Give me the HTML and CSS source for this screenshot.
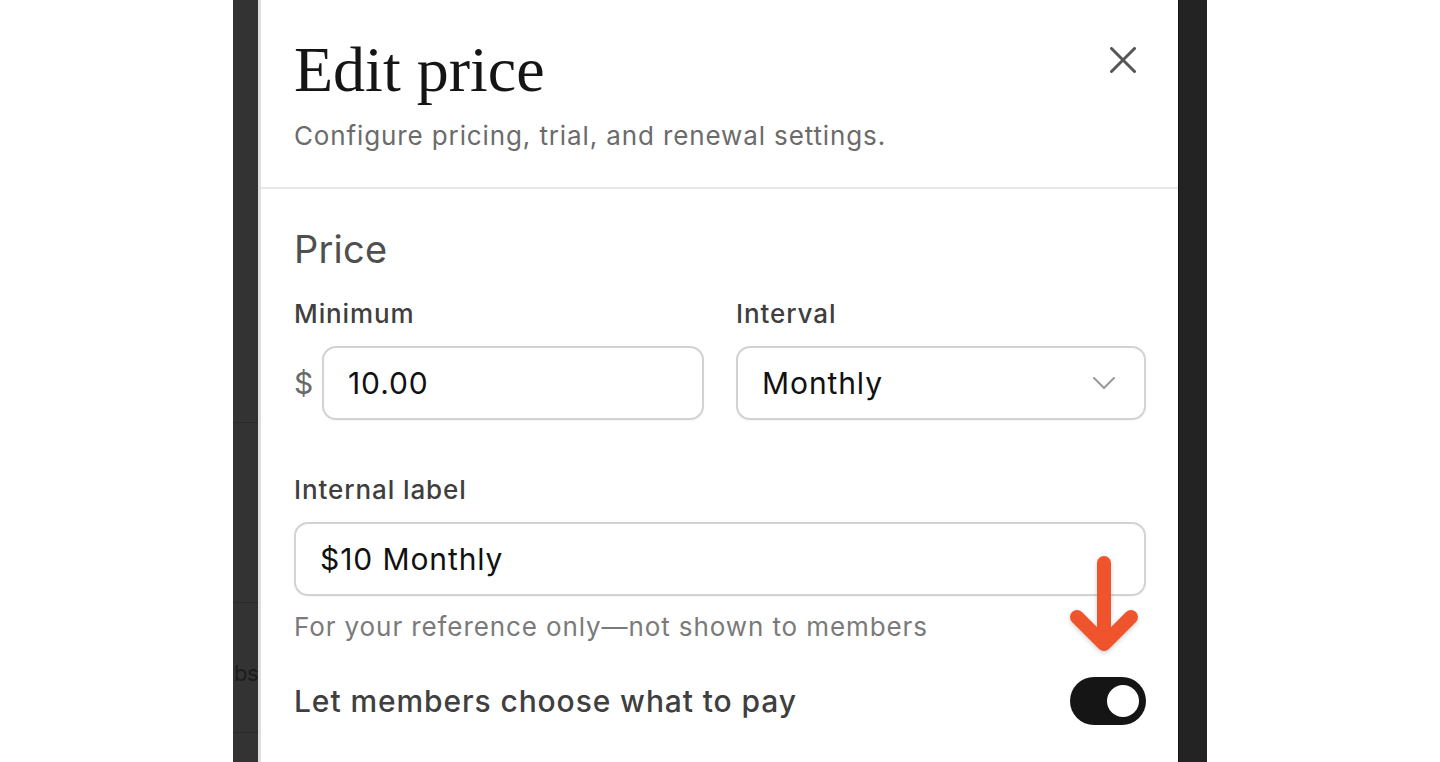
FILE: index.html
```html
<!DOCTYPE html>
<html lang="en">
<head>
<meta charset="utf-8">
<title>Edit price</title>
<link rel="stylesheet" href="styles.css">
</head>
<body>
<div class="page">
  <div class="gutter"></div>
  <div class="scene">
    <div class="under-left">
      <div class="u-row u-r1"></div>
      <div class="u-row u-r2"></div>
      <div class="u-row u-r3"><span class="u-text">bs</span></div>
      <div class="u-row u-r4"></div>
    </div>
    <div class="modal">
      <header class="modal-head">
        <div class="head-text">
          <h1 class="title">Edit price</h1>
          <p class="subtitle">Configure pricing, trial, and renewal settings.</p>
        </div>
        <button class="close" aria-label="Close">
          <svg width="26" height="26" viewBox="0 0 26 26"><path d="M1.5 1.5L24.5 24.5M24.5 1.5L1.5 24.5" stroke="#555" stroke-width="3" stroke-linecap="round" fill="none"/></svg>
        </button>
      </header>
      <section class="modal-body">
        <h2 class="section-title">Price</h2>
        <div class="grid2">
          <div class="field">
            <div class="label">Minimum</div>
            <div class="money">
              <span class="currency">$</span>
              <div class="input">10.00</div>
            </div>
          </div>
          <div class="field">
            <div class="label">Interval</div>
            <div class="input select">
              <span>Monthly</span>
              <svg width="22" height="12" viewBox="0 0 22 12"><path d="M1 1l10 10 10-10" stroke="#9a9a9a" stroke-width="2" fill="none" stroke-linecap="round" stroke-linejoin="round"/></svg>
            </div>
          </div>
        </div>
        <div class="field field-label">
          <div class="label">Internal label</div>
          <div class="input">$10 Monthly</div>
          <div class="help">For your reference only—not shown to members</div>
        </div>
        <div class="toggle-row">
          <span class="toggle-text">Let members choose what to pay</span>
          <span class="toggle"><span class="knob"></span></span>
        </div>
        <svg class="annot-arrow" width="82" height="110" viewBox="0 0 82 110"><path d="M41 13L41 88M14 67L41 94L68 67" stroke="#f0542c" stroke-width="14" stroke-linecap="round" stroke-linejoin="round" fill="none"/></svg>
      </section>
    </div>
    <div class="under-right"></div>
  </div>
</div>
</body>
</html>
```

FILE: styles.css
```css
* { box-sizing: border-box; }
html, body { margin: 0; padding: 0; background: #ffffff; }
body { font-family: Inter, "Noto Sans", "Liberation Sans", sans-serif; }

.page {
  display: flex;
  width: 1440px;
  height: 762px;
  overflow: hidden;
  background: #ffffff;
}
.gutter { width: 233px; flex: none; }

.scene {
  display: flex;
  width: 974px;
  flex: none;
  height: 762px;
  background: #232323;
}

.under-left {
  width: 25px;
  flex: none;
  background: #333333;
  display: flex;
  flex-direction: column;
  overflow: hidden;
}
.u-row { border-bottom: 1px solid #2a2a2a; flex: none; display: flex; justify-content: flex-start; align-items: center; }
.u-r1 { height: 423px; }
.u-r2 { height: 180px; }
.u-r3 { height: 130px; align-items: flex-start; }
.u-r4 { flex: 1; border-bottom: 0; }
.u-text {
  font-size: 22px;
  line-height: 30px;
  letter-spacing: -0.5px;
  color: #1c1c1c;
  white-space: nowrap;
  margin-top: 55px;
  margin-left: 1px;
}

.modal {
  width: 921px;
  flex: none;
  background: #ffffff;
  border-left: 3px solid #dedede;
  border-right: 1px solid #121212;
  position: relative;
}

.modal-head {
  display: flex;
  justify-content: space-between;
  align-items: flex-start;
  background: #ffffff;
  padding: 32px 35px 0 33px;
  height: 189px;
  border-bottom: 2px solid #e8e8e8;
}
.title {
  margin: 0;
  font-family: "Liberation Serif", "DejaVu Serif", serif;
  font-weight: 400;
  font-size: 64px;
  line-height: 76px;
  color: #151515;
}
.subtitle {
  margin: 10px 0 0;
  font-size: 26px;
  line-height: 36px;
  letter-spacing: 0.88px;
  color: #6b6b6b;
}
.close {
  margin-top: 8px;
  width: 40px;
  height: 40px;
  padding: 0;
  border: 0;
  background: transparent;
  display: flex;
  align-items: center;
  justify-content: center;
}

.modal-body {
  padding: 37px 32px 0 33px;
  letter-spacing: 0.9px;
}
.section-title {
  margin: 0;
  font-size: 38px;
  line-height: 46px;
  font-weight: 400;
  letter-spacing: 0.2px;
  color: #4f4f4f;
}
.grid2 {
  display: grid;
  grid-template-columns: 1fr 1fr;
  column-gap: 32px;
  margin-top: 26px;
}
.label {
  font-size: 26px;
  line-height: 32px;
  font-weight: 500;
  color: #3f3f3f;
  margin-bottom: 16px;
}
.money {
  display: flex;
  align-items: center;
  gap: 9px;
}
.currency {
  font-size: 30px;
  color: #6a6a6a;
  width: 19px;
}
.input {
  flex: 1;
  height: 74px;
  border: 2px solid #d2d2d2;
  border-radius: 14px;
  background: #ffffff;
  padding: 0 24px;
  display: flex;
  align-items: center;
  font-size: 30px;
  color: #111111;
  box-shadow: 0 1px 2px rgba(0,0,0,0.04);
}
.select {
  justify-content: space-between;
  padding-right: 29px;
}
.field-label { margin-top: 54px; }
.field-label .input { width: 100%; }
.help {
  margin-top: 15px;
  font-size: 26px;
  line-height: 32px;
  color: #7a7a7a;
}
.toggle-row {
  display: flex;
  align-items: center;
  justify-content: space-between;
  margin-top: 34px;
}
.toggle-text {
  font-size: 30px;
  font-weight: 500;
  color: #3f3f3f;
}
.toggle {
  width: 76px;
  height: 48px;
  border-radius: 24px;
  background: #151515;
  display: flex;
  align-items: center;
  justify-content: flex-end;
  padding-right: 7px;
}
.knob {
  width: 32px;
  height: 32px;
  border-radius: 50%;
  background: #ffffff;
}
.annot-arrow {
  position: absolute;
  left: 802px;
  top: 550px;
  filter: drop-shadow(0 2px 2px rgba(0,0,0,0.18));
}

.under-right {
  flex: 1;
  background: #232323;
}
```
